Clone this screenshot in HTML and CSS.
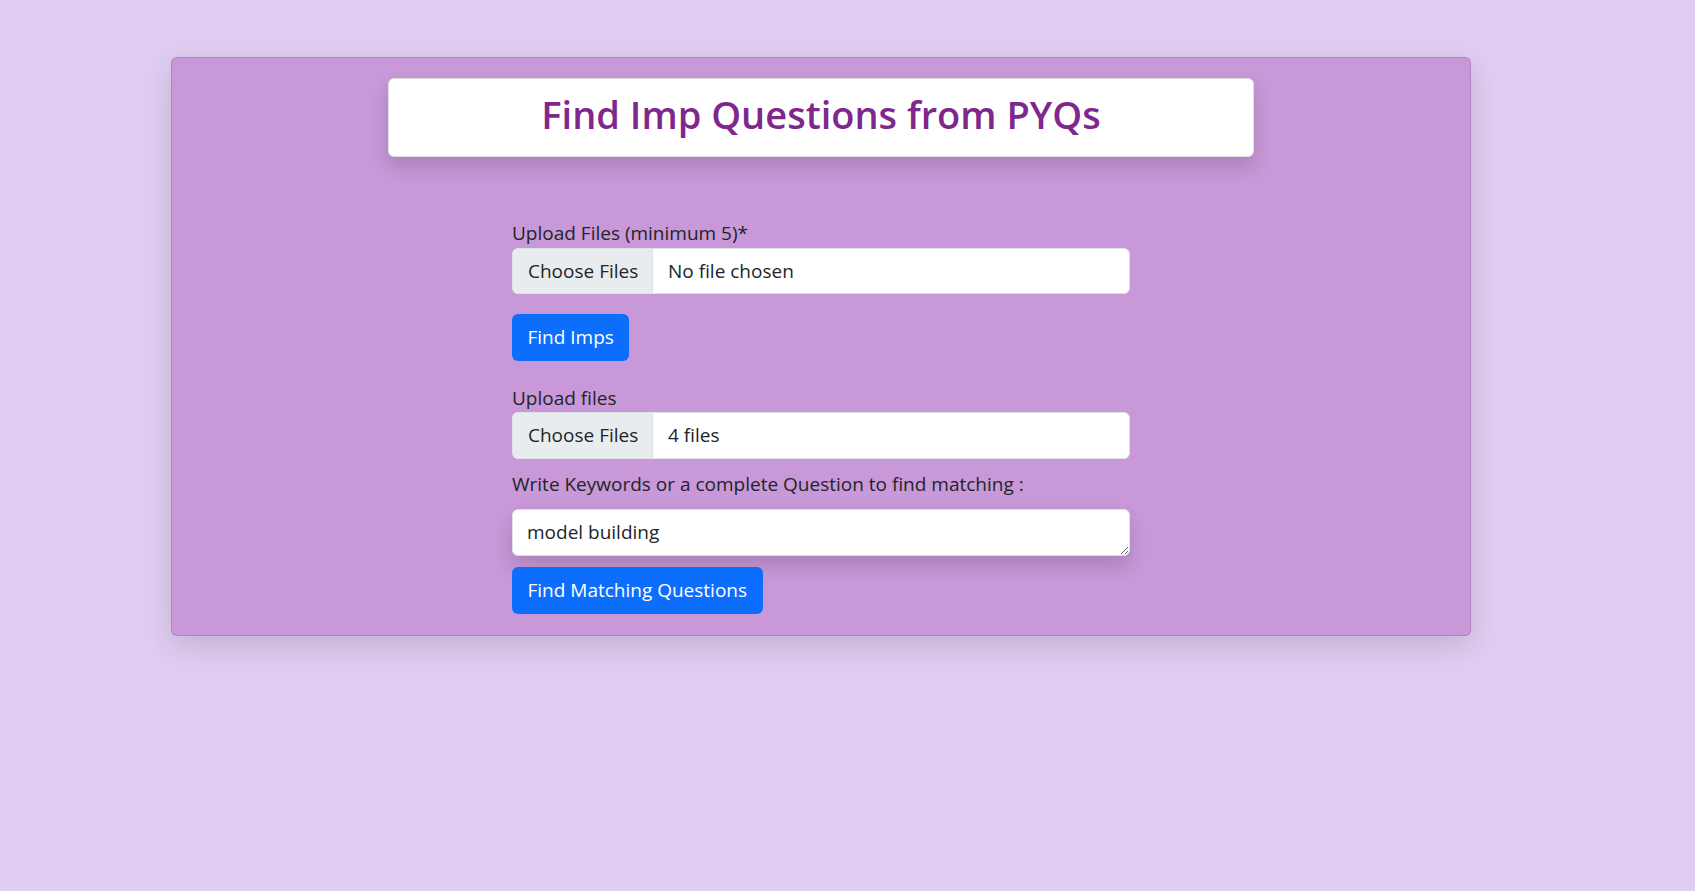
FILE: index.html
```html
<!DOCTYPE html>
<html lang="en">
<head>
<meta charset="utf-8">
<title>Find Imp Questions from PYQs</title>
<link rel="stylesheet" href="styles.css">
</head>
<body>
<div class="card">
  <div class="header">
    <h1 class="title">Find Imp Questions from PYQs</h1>
  </div>
  <form class="form">
    <label class="label">Upload Files (minimum 5)*</label>
    <div class="file">
      <span class="file-btn">Choose Files</span>
      <span class="file-text">No file chosen</span>
    </div>
    <button type="button" class="btn btn-first">Find Imps</button>
    <label class="label label-gap">Upload files</label>
    <div class="file">
      <span class="file-btn">Choose Files</span>
      <span class="file-text">4 files</span>
    </div>
    <label class="label label-kw">Write Keywords or a complete Question to find matching :</label>
    <textarea class="textarea">model building</textarea>
    <button type="button" class="btn btn-second">Find Matching Questions</button>
  </form>
</div>
</body>
</html>
```

FILE: styles.css
```css
* { box-sizing: border-box; }

html, body {
  margin: 0;
  padding: 0;
}

body {
  background: #e0cef2;
  font-family: "Open Sans", "Noto Sans", sans-serif;
  font-size: 19px;
  color: #212529;
  min-height: 891px;
  padding-top: 57px;
}

.card {
  margin: 0 224px 0 171px;
  background: #c898d8;
  border: 1px solid rgba(0, 0, 0, 0.12);
  border-radius: 6px;
  box-shadow: 0 10px 30px rgba(0, 0, 0, 0.14);
  padding: 20px 0 21px;
}

.header {
  width: 866px;
  height: 79px;
  margin: 0 auto;
  background: #fff;
  border: 1px solid #dedede;
  border-radius: 6px;
  box-shadow: 0 10px 19px rgba(0, 0, 0, 0.15);
  display: flex;
  align-items: center;
  justify-content: center;
}

.title {
  margin: 0 0 5px;
  font-size: 38px;
  font-weight: 600;
  line-height: 1.2;
  color: #80278d;
}

.form {
  width: 618px;
  margin: 60px auto 0;
  display: flex;
  flex-direction: column;
  align-items: flex-start;
}

.label {
  display: block;
  line-height: 29px;
  padding-top: 2px;
  margin-bottom: -0.5px;
}

.label-gap { margin-top: 21px; }
.label-kw { margin-top: 9px; margin-bottom: 10px; }

.file {
  width: 100%;
  height: 46.5px;
  display: flex;
  align-items: stretch;
  background: #fff;
  border: 1px solid #dee2e6;
  border-radius: 6px;
  overflow: hidden;
}

.file-btn {
  width: 140px;
  flex: none;
  display: flex;
  align-items: center;
  padding: 0 15px;
  background: #e9ecef;
  border-right: 1px solid #dee2e6;
  color: #212529;
  white-space: nowrap;
}

.file-text {
  display: flex;
  align-items: center;
  padding-left: 15px;
}

.btn {
  height: 46.5px;
  padding: 0 15.5px;
  border: none;
  border-radius: 6px;
  background: #0d6efd;
  color: #fff;
  font-family: inherit;
  font-size: 19px;
  cursor: pointer;
}

.btn-first { margin-top: 20px; }
.btn-second { margin-top: 11px; }

.textarea {
  width: 100%;
  height: 47.5px;
  padding: 8px 14px;
  border: 1px solid #dee2e6;
  border-radius: 6px;
  background: #fff;
  font-family: inherit;
  font-size: 19px;
  line-height: 29px;
  color: #212529;
  box-shadow: 0 10px 19px rgba(0, 0, 0, 0.15);
  resize: vertical;
  display: block;
}
```
